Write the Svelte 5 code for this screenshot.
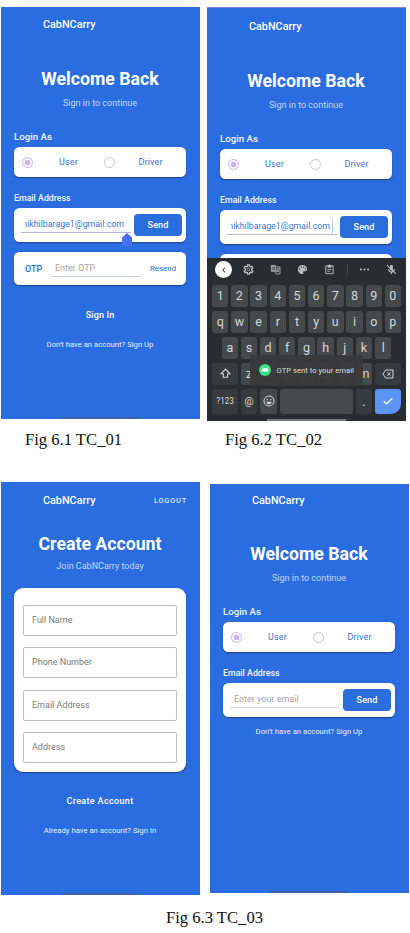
<script>
  const numbers = [...'1234567890'];
  const top = [...'qwertyuiop'];
  const home = [...'asdfghjkl'];
  const bottom = [...'zxcvbnm'];
  const fields = ['Full Name', 'Phone Number', 'Email Address', 'Address'];
</script>

{#snippet heading()}
  <header class="bar"><span class="brand">CabNCarry</span></header>
  <h1 class="welcome">Welcome Back</h1>
  <p class="sub signin-sub">Sign in to continue</p>
{/snippet}

{#snippet role()}
  <h2 class="label login-as">Login As</h2>
  <div class="card roles">
    <i class="radio on"></i>
    <span class="user">User</span>
    <i class="radio"></i>
    <span class="driver">Driver</span>
  </div>
  <h2 class="label email-label">Email Address</h2>
{/snippet}

{#snippet email(filled, caret)}
  <div class="card email">
    <div class="input" class:filled>
      {#if filled}
        <span class="clip"><span class="address">nikhilbarage1@gmail.com</span></span>
      {:else}
        <span class="hint">Enter your email</span>
      {/if}
      {#if caret}<i class="caret"></i>{/if}
    </div>
    <button class="send">Send</button>
  </div>
{/snippet}

<main>
  <div class="row first">
    <section class="phone p1">
      {@render heading()}
      {@render role()}
      <div class="handle-wrap">
        {@render email(true, false)}
        <svg class="handle" width="10" height="13" viewBox="0 0 10 13"><path d="M5 0L10 4.500V12Q10 13 9 13H1Q0 13 0 12V4.500Z" fill="#4a70fb" /></svg>
      </div>
      <div class="card otp">
        <span class="otp-name">OTP</span>
        <span class="otp-input">Enter OTP</span>
        <span class="resend">Resend</span>
      </div>
      <button class="action signin">Sign In</button>
      <p class="switch">Don't have an account? Sign Up</p>
      <i class="nav"></i>
    </section>

    <section class="phone p2">
      {@render heading()}
      {@render role()}
      {@render email(true, true)}
      <div class="card peek"></div>
      <div class="keyboard">
        <div class="tools">
          <span class="back"><svg width="8" height="8" viewBox="0 0 8 8"><path d="M5 1.700L2.700 4L5 6.300" fill="none" stroke="#555" stroke-width="1.100" /></svg></span>
          <svg class="t gear" viewBox="0 0 24 24"><path d="M10 2h4l.5 3 2 1.200 2.900-1.200 2 3.500-2.400 1.900v3.200l2.400 1.900-2 3.500-2.900-1.200-2 1.200-.5 3h-4l-.5-3-2-1.200L4.600 19l-2-3.500L5 13.600v-3.200L2.600 8.500l2-3.500 2.900 1.200 2-1.200z" fill="none" stroke="currentColor" stroke-width="2.800" /><circle cx="12" cy="12" r="2.800" fill="none" stroke="currentColor" stroke-width="1.600" /></svg>
          <svg class="t" viewBox="0 0 24 24"><path d="M3 2h9l3 15H3q-1 0-1-1V3q0-1 1-1z" fill="currentColor" opacity=".8" /><path d="M13 6h7q2 0 2 2v12q0 2-2 2h-7l-1-4M15 10h6M18 8v2M20 10q-1 5-5 8M15 12l5 6" fill="none" stroke="currentColor" stroke-width="1.600" /><path d="M10.500 7.500Q8 5.500 6 7.500T6 12q3 2 5-2H8.500" fill="none" stroke="#292d31" stroke-width="1.600" /></svg>
          <svg class="t" viewBox="0 0 24 24"><path fill="currentColor" fill-rule="evenodd" d="M12 2a10 10 0 000 20c2 0 2.500-1.700 1.500-3-1-1.500 0-3 1.500-3h2c3 0 5-2 5-5 0-5-4.500-9-10-9zM6 9.500a1.500 1.500 0 110 3 1.500 1.500 0 010-3zM9.500 5.500a1.500 1.500 0 110 3 1.500 1.500 0 010-3zM14.500 5.500a1.500 1.500 0 110 3 1.500 1.500 0 010-3zM18 9.500a1.500 1.500 0 110 3 1.500 1.500 0 010-3z" /></svg>
          <svg class="t" viewBox="0 0 24 24"><path d="M4 4h16v17H4z" fill="none" stroke="currentColor" stroke-width="2" /><path d="M8 3h2a2 2 0 014 0h2v5H8z" fill="currentColor" /><path d="M7.500 12h9M7.500 16h6" stroke="currentColor" stroke-width="1.800" /></svg>
          <i class="split"></i>
          <svg class="t" viewBox="0 0 24 24"><g fill="currentColor"><circle cx="4" cy="12" r="2.200" /><circle cx="12" cy="12" r="2.200" /><circle cx="20" cy="12" r="2.200" /></g></svg>
          <svg class="t mic" viewBox="0 0 24 24"><path d="M9 5a3 3 0 016 0v7l-2 2h-2l-2-2z" fill="currentColor" /><path d="M5.500 11q0 6.500 6.500 6.500t6.500-6.500M12 17v5M2.500 2.500l19 19" fill="none" stroke="currentColor" stroke-width="2.200" /></svg>
        </div>
        <div class="keys">{#each numbers as k}<span class="key">{k}</span>{/each}</div>
        <div class="keys">{#each top as k}<span class="key">{k}</span>{/each}</div>
        <div class="keys home">{#each home as k}<span class="key">{k}</span>{/each}</div>
        <div class="keys">
          <span class="key wide dark"><svg width="11" height="11" viewBox="0 0 11 11"><path d="M5.500 1L10 5.700H7.700V9.300H3.300V5.700H1Z" fill="none" stroke="currentColor" stroke-width="1.100" /></svg></span>
          {#each bottom as k}<span class="key">{k}</span>{/each}
          <span class="key wide dark"><svg width="12" height="10" viewBox="0 0 12 10"><path d="M3.700 1H11V9H3.700L1 5ZM5.200 3.300L8.600 6.700M8.600 3.300L5.200 6.700" fill="none" stroke="currentColor" stroke-width="1" /></svg></span>
        </div>
        <div class="keys last">
          <span class="key wide dark sym">?123</span>
          <span class="key dark at">@</span>
          <span class="key"><svg width="12" height="12" viewBox="0 0 12 12"><circle cx="6" cy="6" r="5" fill="none" stroke="currentColor" stroke-width="1" /><circle cx="4.200" cy="4.700" r=".8" fill="currentColor" /><circle cx="7.800" cy="4.700" r=".8" fill="currentColor" /><path d="M3.200 6.700H8.800Q8.200 9.300 6 9.300T3.200 6.700Z" fill="currentColor" /></svg></span>
          <span class="key space"></span>
          <span class="key dark dot">.</span>
          <span class="key wide enter"><svg width="12" height="10" viewBox="0 0 12 10"><path d="M1.800 5.200L4.500 7.900L10.300 2.200" fill="none" stroke="#fff" stroke-width="1.300" /></svg></span>
        </div>
        <i class="nav light"></i>
        <div class="toast">
          <svg width="12" height="12" viewBox="0 0 12 12"><circle cx="6" cy="6" r="6" fill="#3ddc84" /><path d="M2.300 7.500Q2.500 4 6 4T9.700 7.500Z" fill="#fff" /><path d="M3.500 3.200L4.300 4.800M8.500 3.200L7.700 4.800" stroke="#fff" stroke-width=".5" /></svg>
          <span>OTP sent to your email</span>
        </div>
      </div>
    </section>
  </div>

  <div class="captions">
    <p class="c1">Fig 6.1 TC_01</p>
    <p class="c2">Fig 6.2 TC_02</p>
  </div>

  <div class="row second">
    <section class="phone p3">
      <header class="bar"><span class="brand">CabNCarry</span><span class="logout">LOGOUT</span></header>
      <h1 class="create">Create Account</h1>
      <p class="sub join">Join CabNCarry today</p>
      <div class="card form">
        {#each fields as f}<div class="field">{f}</div>{/each}
      </div>
      <button class="action create-btn">Create Account</button>
      <p class="switch already">Already have an account? Sign In</p>
      <i class="nav"></i>
    </section>

    <section class="phone p4">
      {@render heading()}
      {@render role()}
      {@render email(false, false)}
      <p class="switch">Don't have an account? Sign Up</p>
      <i class="nav"></i>
    </section>
  </div>
  <p class="c3">Fig 6.3 TC_03</p>
</main>

<style>
  :global(body) { margin: 0; background: #fff; }
  main { width: 410px; height: 933px; overflow: hidden; background: #fff; box-sizing: border-box; padding-top: 7px; font-family: Roboto, sans-serif; }
  h1, h2, p { margin: 0; font-weight: 400; white-space: nowrap; }
  button { border: 0; padding: 0; background: none; font-family: inherit; color: #fff; display: block; }
  i { display: block; }
  svg { display: block; flex: none; }
  .row { display: flex; align-items: flex-start; }
  .first { height: 415px; padding-left: 1px; gap: 7px; }
  .second { height: 413px; padding-left: 1px; gap: 10px; }
  .phone { position: relative; box-sizing: border-box; width: 199px; background: #2a6de0; color: #fff; overflow: hidden; flex: none; padding: 0 14px 0 13px; }
  .p1 { height: 412px; }
  .p2 { height: 414px; padding-top: 1px; border-top: 1px solid #7884d8; }
  .p3 { height: 413px; }
  .p4 { height: 409px; margin-top: 2px; }
  .bar { display: flex; justify-content: space-between; align-items: center; height: 34px; padding-left: 29px; }
  .brand { font-size: 10.800px; font-weight: 500; }
  .welcome, .create { margin-top: 26px; height: 24px; line-height: 24px; font-size: 17.700px; font-weight: 700; text-align: center; }
  .sub { text-align: center; font-size: 9px; line-height: 12px; color: #c4d6f7; }
  .signin-sub { margin-top: 6px; }
  .label { font-size: 9.700px; line-height: 12px; font-weight: 500; color: #f1f5fe; }
  .login-as { margin-top: 22px; }
  .email-label { margin-top: 14.500px; font-size: 8.800px; }
  .card { background: #fff; border-radius: 5.500px; box-shadow: 0 1px 1.500px rgba(30, 40, 80, .65); box-sizing: border-box; }
  .roles { margin-top: 4px; height: 30px; display: flex; align-items: center; padding-left: 8px; color: #3d76d4; font-size: 9px; }
  .radio { box-sizing: border-box; width: 11px; height: 11px; border: 1.300px solid #c9c6d2; border-radius: 50%; flex: none; }
  .radio.on { border-color: #cdaff8; background: radial-gradient(circle, #cdaff8 0 2.600px, transparent 3.200px); }
  .roles span { flex: none; }
  .user { margin-left: 26px; width: 44.500px; letter-spacing: .15px; }
  .driver { margin-left: 24px; letter-spacing: .15px; }
  .email { margin-top: 4px; height: 34.500px; display: flex; align-items: center; padding: 0 4px 0 7px; justify-content: space-between; }
  .input { width: 110px; height: 16px; border-bottom: 1px solid #d9dae0; display: flex; align-items: center; font-size: 9px; }
  .input.filled { border-color: #bfb5dc; }
  .clip { overflow: hidden; width: 99px; margin-left: 4px; display: flex; justify-content: flex-end; color: #3d76d4; }
  .address { font-size: 8.800px; flex: none; }
  .hint { color: #a5a5a5; padding-left: 4px; }
  .caret { width: 1px; height: 14px; background: #c3cbe2; margin-left: 2px; }
  .send { width: 48px; height: 22px; border-radius: 4px; background: #2a6ddd; font-size: 9px; font-weight: 500; letter-spacing: .1px; text-align: center; }
  .handle-wrap { position: relative; }
  .handle { position: absolute; left: 108px; top: 25px; z-index: 2; }
  .otp { height: 33px; margin-top: 10px; display: flex; align-items: center; padding: 0 10px 0 11px; color: #2a6de0; font-size: 9px; }
  .otp-name { font-weight: 500; width: 26px; flex: none; }
  .otp-input { width: 86px; padding-left: 4px; height: 15px; line-height: 15px; border-bottom: 1px solid #ccd0dc; color: #a9a9a9; flex: none; }
  .resend { font-size: 7.900px; margin-left: 9px; }
  .action { font-weight: 500; font-size: 9px; line-height: 12px; letter-spacing: .15px; width: 100%; text-align: center; }
  .signin { margin-top: 23.500px; }
  .switch { font-size: 7.700px; line-height: 10px; text-align: center; color: #e7effd; margin-top: 19px; }
  .nav { position: absolute; left: 60px; bottom: 0; width: 79px; height: 2px; background: #3b62ad; }
  .peek { height: 30px; margin-top: 9.500px; }

  .keyboard { position: absolute; left: 0; right: 0; bottom: 0; height: 163.500px; background: #292d31; color: #d6d8da; padding: 0 5px; box-sizing: border-box; }
  .tools { height: 24px; display: flex; align-items: center; color: #bfc2c5; margin-bottom: 3.500px; padding-left: 3px; }
  .back { width: 17px; height: 17px; border-radius: 50%; background: #fff; display: flex; align-items: center; justify-content: center; flex: none; }
  .t { width: 11px; height: 11px; margin-left: 16.200px; }
  .t.gear { margin-left: 10.500px; }
  .split { width: 1px; height: 11px; background: #43474b; margin-left: 12px; }
  .split + .t { margin-left: 11px; }
  .keys { display: flex; gap: 2.800px; height: 21.500px; margin-bottom: 4.500px; }
  .keys.home { padding: 0 9.600px; }
  .key { flex: 1 1 0; border-radius: 3px; background: #46494c; font-size: 12.500px; display: flex; align-items: center; justify-content: center; min-width: 0; }
  .key.wide { flex: 0 0 26px; }
  .key.dark { background: #363b3f; }
  .key.sym { font-size: 8.200px; letter-spacing: -.1px; }
  .key.at { font-size: 10px; }
  .key.space { flex: 0 0 73.200px; }
  .key.enter { background: #5b94f5; border-radius: 3px 3px 10px 3px; }
  .keys.last { height: 24.500px; }
  .nav.light { background: #74777a; }
  .toast { position: absolute; left: 42.500px; top: 97.500px; width: 113.500px; height: 30.500px; border-radius: 3px; background: rgba(57, 57, 58, .96); display: flex; align-items: center; padding-left: 9px; box-sizing: border-box; gap: 6px; font-size: 7.700px; color: #dedede; white-space: nowrap; }

  .captions { display: flex; height: 60px; }
  .captions p, .c3 { font: 16.600px/20px "Liberation Serif", serif; color: #111; }
  .captions p { margin-top: 8px; }
  .c1 { padding-left: 25px; width: 175px; }
  .c2 { padding-left: 25px; }
  .c3 { padding-left: 166px; margin-top: 13px; }

  .p3 .bar { height: 36px; }
  .logout { font-size: 7.400px; font-weight: 500; letter-spacing: .8px; margin-right: -1px; color: #dce8fc; }
  .create { margin-top: 13.500px; }
  .join { margin-top: 4px; }
  .form { margin-top: 16.500px; height: 184px; border-radius: 9px; padding: 16.500px 9px 0; display: flex; flex-direction: column; gap: 11.500px; }
  .field { height: 31px; box-sizing: border-box; border: 1px solid #bdbdbd; border-radius: 2px; font-size: 9px; color: #7c7c7c; line-height: 29px; padding-left: 8px; }
  .create-btn { margin-top: 23px; letter-spacing: .35px; }
  .already { margin-top: 19px; }
  .p4 .bar { height: 32px; }
  .p4 .login-as { margin-top: 22px; }
  .p4 .switch { margin-top: 10px; }
</style>
